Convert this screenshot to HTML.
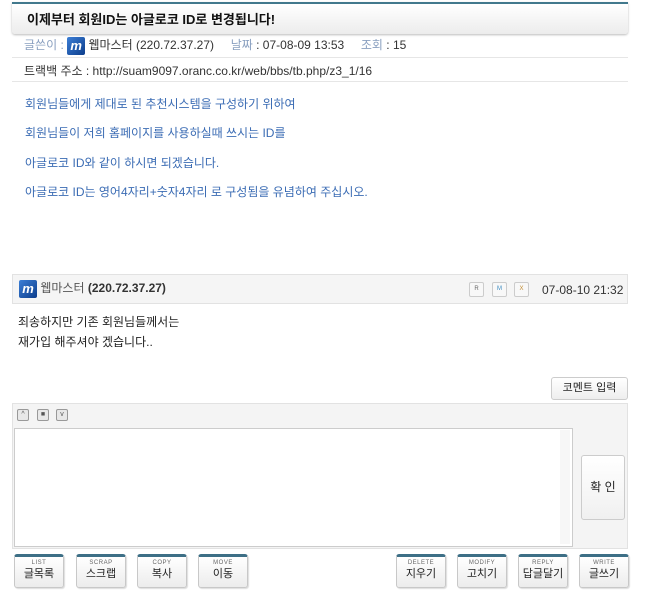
<!DOCTYPE html>
<html><head><meta charset="utf-8"><style>
body{margin:0;width:650px;height:591px;background:#fff;font-family:"Liberation Sans","Noto Sans CJK KR",sans-serif;font-size:12px;color:#333;position:relative;overflow:hidden}
.a{position:absolute;white-space:nowrap}
.logo{display:inline-block;width:18px;height:18px;background:linear-gradient(135deg,#3c7fd6,#0c3d8c);color:#fff;font-weight:bold;font-style:italic;font-size:13px;line-height:18px;text-align:center;vertical-align:middle;border-radius:2px}
.line{position:absolute;left:12px;width:616px;height:1px;background:#e6e6e6}
.blue{color:#3b6cb4}
.gr{color:#8aa0c0}
.btn{position:absolute;top:554px;width:48px;height:30px;border:1px solid #c8c8c8;border-top:3px solid #3d6f86;border-radius:3px;background:linear-gradient(#fff,#ececec);text-align:center;box-shadow:1px 1px 1px #ddd}
.btn small{display:block;font-size:6px;color:#666;margin-top:3px;line-height:7px;letter-spacing:.5px}
.btn b{display:block;font-weight:normal;font-size:11px;color:#222;line-height:14px}
.sb{position:absolute;top:409px;width:10px;height:10px;border:1px solid #999;border-radius:2px;background:#e8e8e8;font-size:7px;line-height:10px;text-align:center;color:#555}
.rb{position:absolute;top:282px;width:13px;height:13px;border:1px solid #ccc;border-radius:2px;background:#f8f8f8;font-size:6px;line-height:13px;text-align:center}
</style></head><body>
<div class="a" style="left:12px;top:2px;width:616px;height:30px;border-top:2px solid #41788c;background:linear-gradient(#fff,#ececec);border-radius:0 0 3px 3px;box-shadow:0 1px 2px #bbb"></div>
<div class="a" style="left:27px;top:9px;font-weight:bold;font-size:13px;color:#111">이제부터 회원ID는 아글로코 ID로 변경됩니다!</div>
<div class="a" style="left:24px;top:37px;line-height:16px"><span class="gr">글쓴이 :</span> <span class="logo">m</span> 웹마스터 (220.72.37.27) &nbsp;&nbsp;&nbsp; <span class="gr">날짜</span> : 07-08-09 13:53 &nbsp;&nbsp;&nbsp; <span class="gr">조회</span> : 15</div>
<div class="line" style="top:57px"></div>
<div class="a" style="left:24px;top:62px">트랙백 주소 : http://suam9097.oranc.co.kr/web/bbs/tb.php/z3_1/16</div>
<div class="line" style="top:81px"></div>
<div class="a blue" style="left:25px;top:95px">회원님들에게 제대로 된 추천시스템을 구성하기 위하여</div>
<div class="a blue" style="left:25px;top:124px">회원님들이 저희 홈페이지를 사용하실때 쓰시는 ID를</div>
<div class="a blue" style="left:25px;top:154px">아글로코 ID와 같이 하시면 되겠습니다.</div>
<div class="a blue" style="left:25px;top:183px">아글로코 ID는 영어4자리+숫자4자리 로 구성됨을 유념하여 주십시오.</div>
<div class="a" style="left:12px;top:274px;width:614px;height:28px;border:1px solid #e2e2e2;background:#f5f5f5"></div>
<div class="a" style="left:19px;top:279px;line-height:18px"><span class="logo">m</span> <span style="color:#555">웹마스터</span> <b>(220.72.37.27)</b></div>
<div class="rb" style="left:469px;color:#666">R</div>
<div class="rb" style="left:492px;color:#3a8ac0">M</div>
<div class="rb" style="left:514px;color:#c08a30">X</div>
<div class="a" style="left:542px;top:283px">07-08-10 21:32</div>
<div class="a" style="left:18px;top:312px;line-height:20px;color:#222">죄송하지만 기존 회원님들께서는<br>재가입 해주셔야 겠습니다..</div>
<div class="a" style="left:551px;top:377px;width:75px;height:21px;border:1px solid #ccc;border-radius:3px;background:linear-gradient(#fff,#eee);text-align:center;line-height:21px;font-size:11px;color:#222">코멘트 입력</div>
<div class="a" style="left:12px;top:403px;width:614px;height:144px;border:1px solid #e2e2e2;background:#f4f4f4"></div>
<div class="sb" style="left:17px">^</div><div class="sb" style="left:37px">■</div><div class="sb" style="left:56px">v</div>
<div class="a" style="left:14px;top:428px;width:557px;height:117px;border:1px solid #ccc;background:#fff"></div>
<div class="a" style="left:560px;top:430px;width:10px;height:114px;background:#f7f7f7"></div>
<div class="a" style="left:581px;top:455px;width:42px;height:63px;border:1px solid #ccc;border-radius:3px;background:linear-gradient(#fff,#f0f0f0);text-align:center;line-height:63px;color:#222">확 인</div>
<div class="btn" style="left:14px"><small>LIST</small><b>글목록</b></div>
<div class="btn" style="left:76px"><small>SCRAP</small><b>스크랩</b></div>
<div class="btn" style="left:137px"><small>COPY</small><b>복사</b></div>
<div class="btn" style="left:198px"><small>MOVE</small><b>이동</b></div>
<div class="btn" style="left:396px"><small>DELETE</small><b>지우기</b></div>
<div class="btn" style="left:457px"><small>MODIFY</small><b>고치기</b></div>
<div class="btn" style="left:518px"><small>REPLY</small><b>답글달기</b></div>
<div class="btn" style="left:579px"><small>WRITE</small><b>글쓰기</b></div>
</body></html>
